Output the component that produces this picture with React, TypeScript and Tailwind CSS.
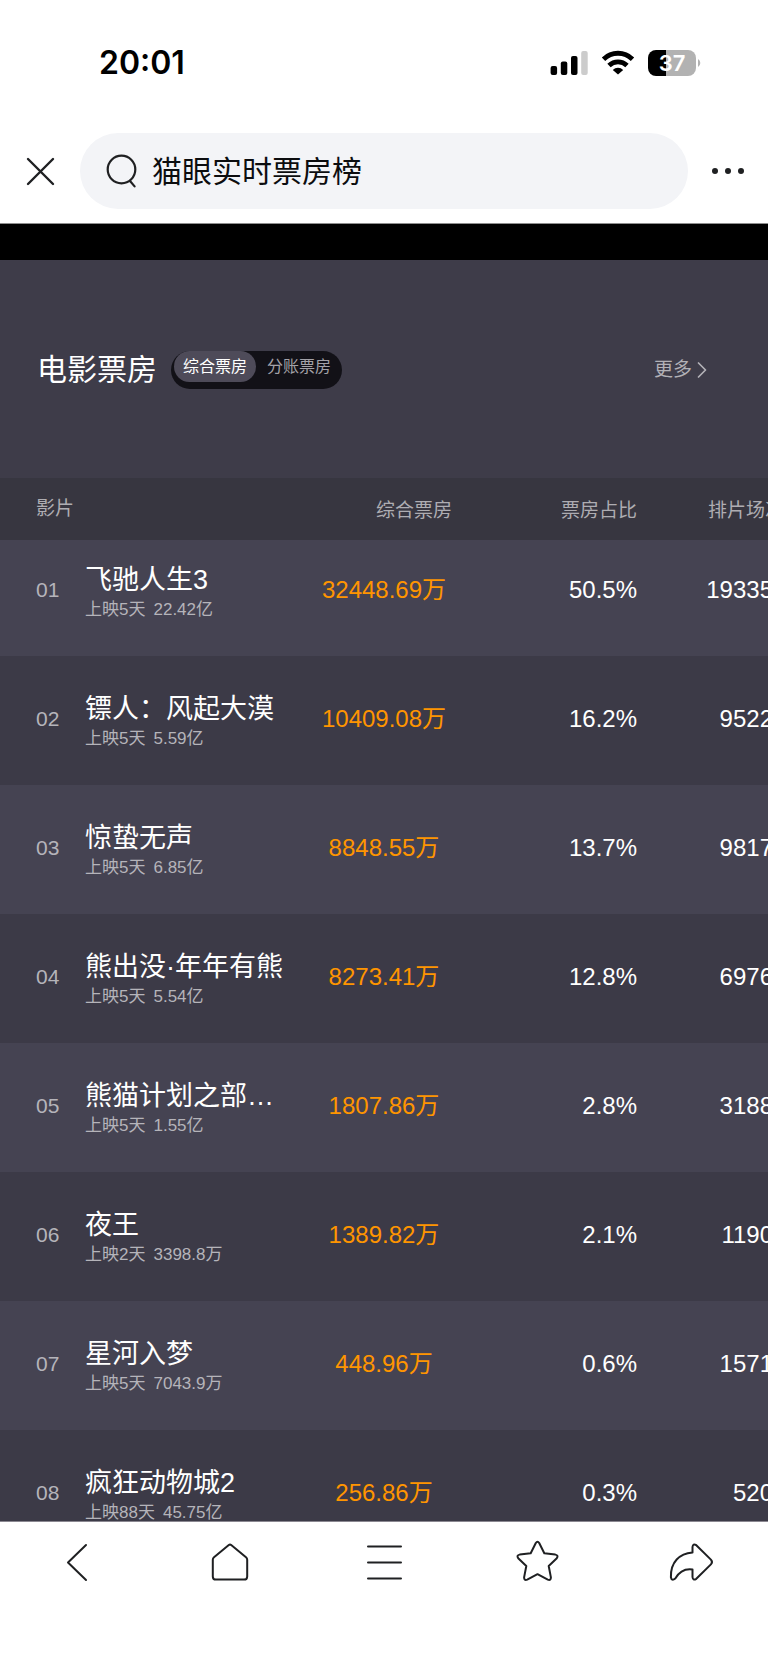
import { ChevronRight } from "lucide-react";

type Movie = {
  rank: string;
  title: string;
  days: string;
  total: string;
  gross: string;
  share: string;
  shows: string;
};

const movies: Movie[] = [
  { rank: "01", title: "飞驰人生3", days: "上映5天", total: "22.42亿", gross: "32448.69万", share: "50.5%", shows: "19335" },
  { rank: "02", title: "镖人：风起大漠", days: "上映5天", total: "5.59亿", gross: "10409.08万", share: "16.2%", shows: "9522" },
  { rank: "03", title: "惊蛰无声", days: "上映5天", total: "6.85亿", gross: "8848.55万", share: "13.7%", shows: "9817" },
  { rank: "04", title: "熊出没·年年有熊", days: "上映5天", total: "5.54亿", gross: "8273.41万", share: "12.8%", shows: "6976" },
  { rank: "05", title: "熊猫计划之部…", days: "上映5天", total: "1.55亿", gross: "1807.86万", share: "2.8%", shows: "3188" },
  { rank: "06", title: "夜王", days: "上映2天", total: "3398.8万", gross: "1389.82万", share: "2.1%", shows: "1190" },
  { rank: "07", title: "星河入梦", days: "上映5天", total: "7043.9万", gross: "448.96万", share: "0.6%", shows: "1571" },
  { rank: "08", title: "疯狂动物城2", days: "上映88天", total: "45.75亿", gross: "256.86万", share: "0.3%", shows: "520" },
];

function StatusBar() {
  return (
    <div className="flex h-[125px] items-center justify-between pr-[67px] pl-[99px]">
      <span className="font-['Inter'] text-[32px] leading-10 font-semibold text-black">20:01</span>
      <div className="flex items-center">
        <svg width="38" height="26" viewBox="0 0 38 26" aria-hidden="true">
          <rect x="0.6" y="16" width="6.5" height="9" rx="2" />
          <rect x="10.8" y="11.5" width="6.5" height="13.5" rx="2" />
          <rect x="21" y="6" width="6.5" height="19" rx="2" />
          <rect x="31.2" y="1" width="6.5" height="24" rx="2" fill="#cccccc" />
        </svg>
        <svg className="ml-[13px]" width="34" height="26" viewBox="0 0 34 26" aria-hidden="true">
          <g fill="none" stroke="#000" strokeWidth="4.8">
            <path d="M2.5 9.2a20.6 20.6 0 0 1 29 0" />
            <path d="M8 15.4a13 13 0 0 1 18 0" />
          </g>
          <path d="M17 24.6l-5.2-4.6a7.4 7.4 0 0 1 10.4 0z" />
        </svg>
        <div className="ml-[13px] flex h-[26px] w-12 items-center justify-center rounded-lg bg-linear-to-r from-black from-37% to-[#b2b2b2] to-37%">
          <span className="font-['Inter'] text-[22px] leading-6 font-semibold text-white">37</span>
        </div>
        <svg className="ml-[2px]" width="3" height="8" viewBox="0 0 3 8" fill="#b2b2b2" aria-hidden="true">
          <path d="M0 0a4.6 4.6 0 0 1 0 8z" />
        </svg>
      </div>
    </div>
  );
}

function SearchBar() {
  return (
    <div className="flex items-center pt-2 pr-6 pb-[14px] pl-[26px]">
      <button type="button" aria-label="关闭" className="text-[#1f2022]">
        <svg width="29" height="29" viewBox="0 0 29 29" fill="none" stroke="currentColor" strokeWidth="2.4" strokeLinecap="round">
          <path d="M2 2l25 25M27 2L2 27" />
        </svg>
      </button>
      <label className="mr-6 ml-[25px] flex h-[76px] min-w-0 flex-1 items-center rounded-full bg-[#f3f4f7] pl-[26px]">
        <svg width="31" height="34" viewBox="0 0 31 34" fill="none" stroke="#1f2022" strokeWidth="2.2" strokeLinecap="round" aria-hidden="true">
          <circle cx="15.5" cy="15.5" r="13.8" />
          <path d="M24 27l4.6 5.4" />
        </svg>
        <input
          type="text"
          aria-label="搜索"
          defaultValue="猫眼实时票房榜"
          className="ml-[15px] min-w-0 flex-1 bg-transparent pt-[2px] text-[30px] leading-10 text-[#0c0d0f] outline-none"
        />
      </label>
      <button type="button" aria-label="更多选项">
        <svg width="32" height="8" viewBox="0 0 32 8" fill="#1f2022">
          <circle cx="3" cy="4" r="3" />
          <circle cx="16" cy="4" r="3" />
          <circle cx="29" cy="4" r="3" />
        </svg>
      </button>
    </div>
  );
}

function BoardHeader() {
  return (
    <div className="flex h-[218px] items-center px-[37px] pt-[2px]">
      <h1 className="text-[30px] leading-10 text-white">电影票房</h1>
      <div className="ml-[14px] flex h-[38px] items-start rounded-full bg-[#121117] pr-[11px] pl-[3px]">
        <button type="button" className="h-[31px] rounded-full bg-[#4e4b59] px-[9px] text-[16px] leading-8 text-white">
          综合票房
        </button>
        <button type="button" className="h-[31px] pl-[11px] text-[16px] leading-8 text-[#a3a2a8]">
          分账票房
        </button>
      </div>
      <a href="#more" className="mr-[23px] ml-auto flex items-center text-[19px] leading-6 text-[#b2b1b7]">
        更多
        <ChevronRight className="-mr-2 -ml-1 size-7" strokeWidth={1.5} />
      </a>
    </div>
  );
}

function BoxOfficeTable() {
  return (
    <table className="w-[calc(100%+43px)] table-fixed">
      <thead>
        <tr className="h-[62px] bg-[#373640] text-[19px] leading-6 text-[#aeadb2]">
          <th className="pl-9 text-left font-normal">影片</th>
          <th className="w-[170px] pt-1 pr-[19px] text-right font-normal">综合票房</th>
          <th className="w-[170px] pt-1 pr-1 text-right font-normal">票房占比</th>
          <th className="w-[170px] pt-1 pr-[27px] text-right font-normal">排片场次</th>
        </tr>
      </thead>
      <tbody>
        {movies.map((movie) => (
          <tr
            key={movie.rank}
            className="h-[129px] align-bottom text-[24px] leading-6 text-white first:h-[116px] odd:bg-[#454352] even:bg-[#3c3a47]"
          >
            <td className="pb-[34px] pl-9">
              <div className="flex items-center">
                <span className="w-[49px] pb-1 text-[21px] text-[#b5b4ba]">{movie.rank}</span>
                <div className="whitespace-nowrap">
                  <p className="text-[27px] leading-9">{movie.title}</p>
                  <p className="flex gap-2 text-[17px] leading-6 text-[#b5b4ba]">
                    <span>{movie.days}</span>
                    <span>{movie.total}</span>
                  </p>
                </div>
              </div>
            </td>
            <td className="pr-1 pb-[54px] text-center text-[#ff9500]">{movie.gross}</td>
            <td className="pr-1 pb-[54px] text-right">{movie.share}</td>
            <td className="pr-[38px] pb-[54px] text-right">{movie.shows}</td>
          </tr>
        ))}
      </tbody>
    </table>
  );
}

function BottomNav() {
  return (
    <nav className="h-[149px] shrink-0 border-t border-[#8b8891] bg-white pt-[17px]">
      <div className="grid grid-cols-5 text-[#1f2022] [&_svg]:fill-none [&_svg]:stroke-current [&_svg]:stroke-2 [&>button]:flex [&>button]:justify-center">
        <button type="button" aria-label="后退">
          <svg width="48" height="48" viewBox="0 0 48 48" strokeLinecap="round" strokeLinejoin="round">
            <path d="M33 6L15 23.5 33 41" />
          </svg>
        </button>
        <button type="button" aria-label="首页">
          <svg width="48" height="48" viewBox="0 0 48 48" strokeLinejoin="round">
            <path d="M22.8 6.1L8 18.2Q6.8 19.2 6.8 20.8V37.4Q6.8 40.6 10 40.6H38Q41.2 40.6 41.2 37.4V20.8Q41.2 19.2 40 18.2L25.2 6.1Q24 5.1 22.8 6.1Z" />
          </svg>
        </button>
        <button type="button" aria-label="菜单">
          <svg width="48" height="48" viewBox="0 0 48 48" strokeLinecap="round">
            <path d="M8 7.5H41M8 23.5H41M8 39.5H41" />
          </svg>
        </button>
        <button type="button" aria-label="收藏">
          <svg width="48" height="48" viewBox="0 0 48 48" strokeLinejoin="round">
            <path d="M21.8 4Q23.5 1.6 25.2 4L30.3 14.2 41.3 15.6Q44.8 16.4 42.8 19.2L34.7 27 36.9 38.4Q36.9 41.8 33.8 40.6L23.5 35.2 13.2 40.6Q10.1 41.8 10.1 38.4L12.3 27 4.2 19.2Q2.2 16.4 5.7 15.6L16.7 14.2Z" />
          </svg>
        </button>
        <button type="button" aria-label="分享">
          <svg width="48" height="48" viewBox="0 0 48 48" strokeLinejoin="round">
            <path d="M25.5 13.4V8Q25.9 4 29.3 6.2L43.9 20.6Q46.1 23 43.9 25.4L29.3 39.8Q25.9 42 25.5 38V30.4Q14.5 28.8 8.3 39.4Q4.7 42.4 3.9 38.2C3.5 23 12.5 14.4 25.5 13.4Z" />
          </svg>
        </button>
      </div>
    </nav>
  );
}

export default function App() {
  return (
    <div className="flex h-screen flex-col overflow-hidden bg-white font-['Liberation_Sans','Noto_Sans_CJK_SC',sans-serif]">
      <header className="shrink-0 border-b border-[#8e8e8e]">
        <StatusBar />
        <SearchBar />
      </header>
      <main className="min-h-0 flex-1 overflow-x-auto overflow-y-hidden border-t-36 border-black bg-[#3e3c49] [scrollbar-width:none]">
        <BoardHeader />
        <BoxOfficeTable />
      </main>
      <BottomNav />
    </div>
  );
}
